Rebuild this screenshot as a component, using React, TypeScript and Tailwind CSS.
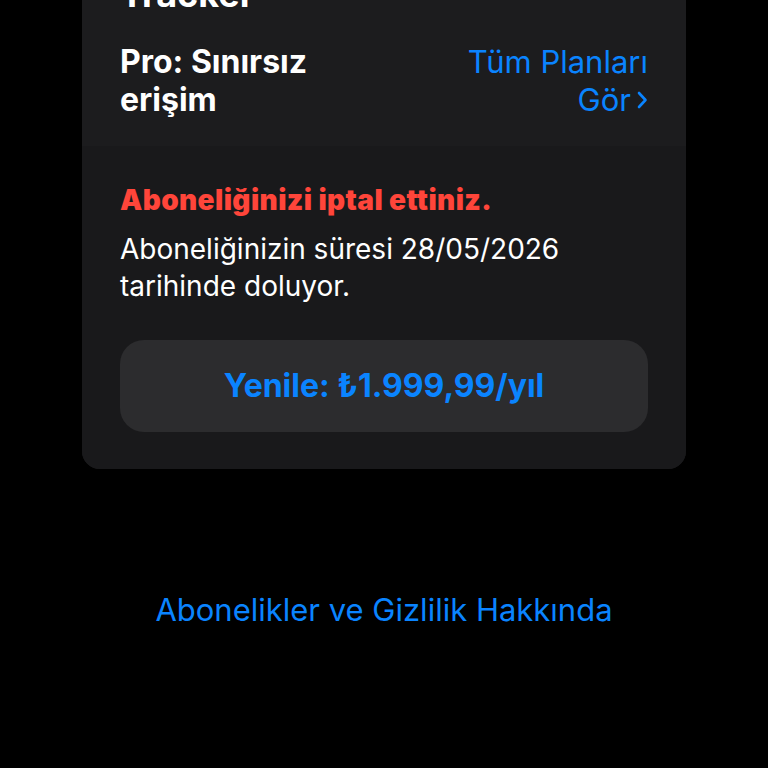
import React from "react";

export default function App() {
  return (
    <div
      className="bg-black w-[768px] h-[768px] overflow-hidden"
      style={{ fontFamily: "Inter, 'Noto Sans', sans-serif" }}
    >
      <div className="ml-[82px] w-[604px] mt-[-42px] rounded-[18px] overflow-hidden bg-[#1c1c1e]">
        <div className="px-[38px] pt-[16px] pb-[27px]">
          <div className="text-white text-[36px] font-bold leading-[40px]">Tracker</div>
          <div className="mt-[29px] flex justify-between items-start">
            <div className="text-white text-[32px] font-bold leading-[38px] w-[260px]">
              Pro: Sınırsız erişim
            </div>
            <div className="text-[#0a84ff] text-[31px] leading-[38px] text-right">
              <div>Tüm Planları</div>
              <div className="flex items-center justify-end gap-[6px]">
                <span>Gör</span>
                <svg width="11" height="20" viewBox="0 0 11 20" fill="none">
                  <path d="M2 3 L8.5 10 L2 17" stroke="#0a84ff" strokeWidth="2.6" strokeLinecap="round" strokeLinejoin="round" />
                </svg>
              </div>
            </div>
          </div>
        </div>
        <div className="bg-[#19191b] px-[38px] pt-[38px] pb-[37px]">
          <div className="text-[#ff453a] text-[28px] font-black leading-[32px] tracking-[0.4px]">
            Aboneliğinizi iptal ettiniz.
          </div>
          <div className="mt-[15px] text-white text-[28px] leading-[37px]">
            Aboneliğinizin süresi 28/05/2026 tarihinde doluyor.
          </div>
          <button className="mt-[35px] w-full h-[92px] rounded-[24px] bg-[#2c2c2e] flex items-center justify-center text-[#0a84ff] text-[32px] font-bold">
            Yenile: ₺1.999,99/yıl
          </button>
        </div>
      </div>
      <div className="mt-[123px] text-center text-[#0a84ff] text-[31px] leading-[36px]">
        Abonelikler ve Gizlilik Hakkında
      </div>
    </div>
  );
}
